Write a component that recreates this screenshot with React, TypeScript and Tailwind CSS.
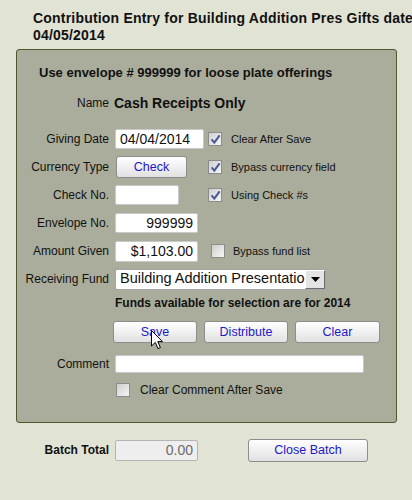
import React from 'react';

function Check({ checked = false }: { checked?: boolean }) {
  return (
    <span className="inline-flex h-[14px] w-[14px] shrink-0 items-center justify-center border border-[#8c8c8c] bg-linear-to-br from-[#cfcfcf] to-[#f6f6f6]">
      {checked && (
        <svg width="11" height="11" viewBox="0 0 11 11">
          <path d="M1.6 5.4 L4.3 8.6 L9.6 1.4" fill="none" stroke="#4a5694" strokeWidth="2" />
        </svg>
      )}
    </span>
  );
}

function Btn({ label, className = '', children }: { label: string; className?: string; children?: React.ReactNode }) {
  return (
    <div
      className={`relative flex items-center justify-center rounded-[3px] border border-[#8d8d8d] bg-linear-to-b from-white to-[#e1e1e1] text-[12.5px] text-[#2418c6] ${className}`}
    >
      {label}
      {children}
    </div>
  );
}

export default function App() {
  return (
    <div className="h-[500px] w-[412px] overflow-hidden bg-[#e1e3d4] font-['Liberation_Sans',Arial,sans-serif] text-[#111]">
      {/* heading */}
      <div className="whitespace-nowrap pl-[33px] pt-[10px] text-[14px] font-bold leading-[17px] tracking-[0.2px]">
        Contribution Entry for Building Addition Pres Gifts dated
        <br />
        04/05/2014
      </div>

      {/* entry panel */}
      <div className="ml-[16px] mt-[5px] w-[381px] rounded-[3px] border border-[#4f5730] bg-[#aaad9b] pb-[24px] pt-[16px]">
        <div className="pl-[22px] text-[13px] font-bold leading-[14px]">
          Use envelope # 999999 for loose plate offerings
        </div>

        <div className="mt-[13px] flex h-[20px] items-center">
          <div className="w-[92px] text-right text-[12px]">Name</div>
          <div className="ml-[5px] text-[14px] font-bold">Cash Receipts Only</div>
        </div>

        <div className="mt-[12px] flex h-[28px] items-center">
          <div className="w-[92px] text-right text-[12px]">Giving Date</div>
          <div className="ml-[6px] w-[93px]">
            <div className="flex h-[20px] w-[89px] items-center rounded-[2px] border border-[#c9c9c9] bg-white pl-[4px] text-[14px]">
              04/04/2014
            </div>
          </div>
          <Check checked />
          <span className="ml-[9px] text-[11px]">Clear After Save</span>
        </div>

        <div className="flex h-[28px] items-center">
          <div className="w-[92px] text-right text-[12px]">Currency Type</div>
          <div className="ml-[7px] w-[92px]">
            <Btn label="Check" className="h-[22px] w-[71px]" />
          </div>
          <Check checked />
          <span className="ml-[9px] text-[11px]">Bypass currency field</span>
        </div>

        <div className="flex h-[28px] items-center">
          <div className="w-[92px] text-right text-[12px]">Check No.</div>
          <div className="ml-[6px] w-[93px]">
            <div className="h-[20px] w-[64px] rounded-[2px] border border-[#c9c9c9] bg-white" />
          </div>
          <Check checked />
          <span className="ml-[9px] text-[11px]">Using Check #s</span>
        </div>

        <div className="flex h-[28px] items-center">
          <div className="w-[92px] text-right text-[12px]">Envelope No.</div>
          <div className="ml-[6px] flex h-[20px] w-[83px] items-center justify-end rounded-[2px] border border-[#c9c9c9] bg-white pr-[4px] text-[14px]">
            999999
          </div>
        </div>

        <div className="flex h-[28px] items-center">
          <div className="w-[92px] text-right text-[12px]">Amount Given</div>
          <div className="ml-[6px] w-[96px]">
            <div className="flex h-[21px] w-[83px] items-center justify-end rounded-[2px] border border-[#c9c9c9] bg-white pr-[4px] text-[14px]">
              $1,103.00
            </div>
          </div>
          <Check />
          <span className="ml-[8px] text-[11px]">Bypass fund list</span>
        </div>

        <div className="flex h-[28px] items-center">
          <div className="w-[92px] text-right text-[12px]">Receiving Fund</div>
          <div className="ml-[6px] flex h-[21px] w-[211px] items-stretch overflow-hidden rounded-[2px] border border-[#a5a5a5] bg-white">
            <div className="flex flex-1 items-center overflow-hidden whitespace-nowrap pl-[4px] text-[14.5px]">
              Building Addition Presentation
            </div>
            <div className="flex w-[20px] items-center justify-center border border-t-white border-l-white border-b-[#6d6d6d] border-r-[#6d6d6d] bg-[#e4e4e4]">
              <svg width="9" height="5" viewBox="0 0 9 5">
                <path d="M0 0 H9 L4.5 5 Z" fill="#000" />
              </svg>
            </div>
          </div>
        </div>

        <div className="flex h-[20px] items-center pl-[98px] text-[12px] font-bold">
          Funds available for selection are for 2014
        </div>

        <div className="ml-[96px] mt-[8px] flex gap-[7px]">
          <Btn label="Save" className="h-[22px] w-[84px]">
            <svg className="absolute left-[37px] top-[8px]" width="13" height="20" viewBox="0 0 13 20">
              <path d="M0.5 0.5 V16 L4.3 12.4 L7 18.6 L9.4 17.6 L6.8 11.6 H11.5 Z" fill="#fff" stroke="#000" strokeWidth="1" />
            </svg>
          </Btn>
          <Btn label="Distribute" className="h-[22px] w-[84px]" />
          <Btn label="Clear" className="h-[22px] w-[85px]" />
        </div>

        <div className="mt-[12px] flex h-[18px] items-center">
          <div className="w-[92px] text-right text-[12px]">Comment</div>
          <div className="ml-[6px] h-[18px] w-[249px] rounded-[2px] border border-[#c9c9c9] bg-white" />
        </div>

        <div className="mt-[9px] flex h-[16px] items-center pl-[99px]">
          <Check />
          <span className="ml-[10px] text-[12px]">Clear Comment After Save</span>
        </div>
      </div>

      {/* batch footer */}
      <div className="mt-[15px] flex h-[24px] items-center">
        <div className="w-[109px] text-right text-[12px] font-bold">Batch Total</div>
        <div className="ml-[6px] flex h-[21px] w-[83px] items-center justify-end rounded-[2px] border border-[#b4b4b4] bg-[#eeeeee] pr-[4px] text-[14px] text-[#6a6a6a]">
          0.00
        </div>
        <Btn label="Close Batch" className="ml-[50px] h-[23px] w-[120px]" />
      </div>
    </div>
  );
}
